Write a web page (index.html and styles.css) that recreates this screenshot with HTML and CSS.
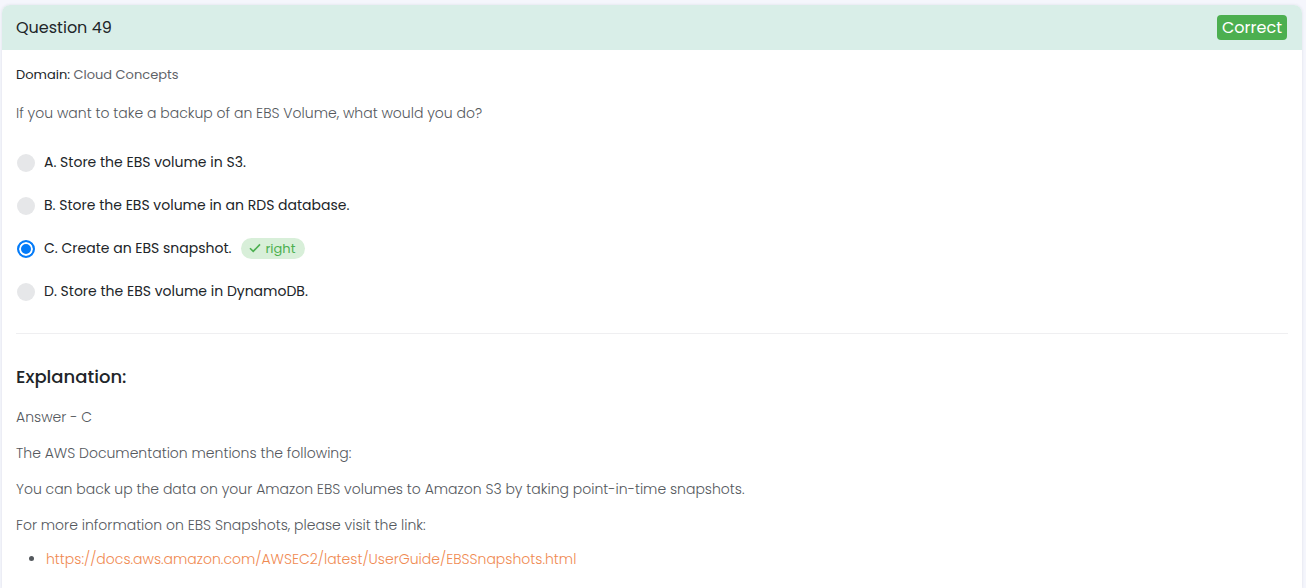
FILE: index.html
```
<!DOCTYPE html>
<html lang="en">
<head>
<meta charset="utf-8">
<meta name="viewport" content="width=device-width, initial-scale=1">
<title>Question 49</title>
<link rel="stylesheet" href="styles.css">
</head>
<body>
<main class="card">
  <header class="card-header">
    <h1 class="question-title">Question 49</h1>
    <span class="status">Correct</span>
  </header>
  <div class="card-body">
    <p class="domain"><span class="domain-label">Domain:</span> Cloud Concepts</p>
    <p class="prompt" id="prompt">If you want to take a backup of an EBS Volume, what would you do?</p>
    <div class="options" role="radiogroup" aria-labelledby="prompt">
      <div class="option">
        <input class="radio" type="radio" name="answer" id="a">
        <label for="a">A. Store the EBS volume in S3.</label>
      </div>
      <div class="option">
        <input class="radio" type="radio" name="answer" id="b">
        <label for="b">B. Store the EBS volume in an RDS database.</label>
      </div>
      <div class="option">
        <input class="radio" type="radio" name="answer" id="c" checked>
        <label for="c">C. Create an EBS snapshot.</label>
        <span class="badge"><svg class="check" viewBox="0 0 12 10" aria-hidden="true"><path d="M1 5.2 4.2 8.4 11 1.4"/></svg>right</span>
      </div>
      <div class="option">
        <input class="radio" type="radio" name="answer" id="d">
        <label for="d">D. Store the EBS volume in DynamoDB.</label>
      </div>
    </div>
    <section class="explanation">
      <h2 class="explanation-title">Explanation:</h2>
      <p>Answer - C</p>
      <p>The AWS Documentation mentions the following:</p>
      <p>You can back up the data on your Amazon EBS volumes to Amazon S3 by taking point-in-time snapshots.</p>
      <p>For more information on EBS Snapshots, please visit the link:</p>
      <ul class="links">
        <li><a href="https://docs.aws.amazon.com/AWSEC2/latest/UserGuide/EBSSnapshots.html">https://docs.aws.amazon.com/AWSEC2/latest/UserGuide/EBSSnapshots.html</a></li>
      </ul>
    </section>
  </div>
</main>
</body>
</html>
```
FILE: styles.css
```
* { box-sizing: border-box; }
body {
  margin: 0;
  padding: 5px 4px 0 2px;
  background: #f5f6fc;
  color: #54585d;
  font: 300 14px/20px Poppins, Inter, sans-serif;
}
h1, h2, p, ul { margin: 0; }
.card {
  min-height: calc(100vh - 5px);
  background: #fff;
  border-radius: 8px 8px 0 0;
  box-shadow: 0 0 3px #dcdde8;
}
.card-header {
  display: flex;
  align-items: center;
  justify-content: space-between;
  height: 45px;
  padding: 0 15px 0 14px;
  background: #d9eee8;
  border-radius: 8px 8px 0 0;
}
.question-title {
  color: #212529;
  font-size: 16px;
  font-weight: 400;
}
.status {
  padding: 0 5px;
  border-radius: 4px;
  background: #4caf50;
  color: #fff;
  font-size: 16px;
  font-weight: 400;
  line-height: 25px;
}
.card-body { padding: 15px 14px 18px; }
.domain { color: #5f6368; font-size: 13px; font-weight: 400; }
.domain-label { color: #212529; }
.prompt { margin-top: 18px; }
.options {
  display: flex;
  flex-direction: column;
  gap: 21px;
  padding: 28px 0 31px;
  border-bottom: 1px solid #efeff1;
}
.option {
  display: flex;
  align-items: center;
  height: 22px;
  color: #212529;
  font-weight: 400;
}
.radio {
  appearance: none;
  width: 18px;
  height: 18px;
  margin: 1px 9px 0 1px;
  border-radius: 50%;
  background: #e6e7e9;
}
.radio:checked {
  border: 2px solid #047bf8;
  background: #047bf8;
  box-shadow: inset 0 0 0 2px #fff;
}
.badge {
  display: flex;
  align-items: center;
  gap: 5px;
  margin-left: 9px;
  padding: 0 10px 0 8px;
  border-radius: 11px;
  background: #d8efd9;
  color: #4caf50;
  font-size: 13px;
  line-height: 21px;
}
.check {
  width: 12px;
  height: 10px;
  fill: none;
  stroke: #4caf50;
  stroke-width: 1.6;
}
.explanation {
  display: flex;
  flex-direction: column;
  gap: 16px;
  padding-top: 31px;
}
.explanation-title {
  margin-bottom: 2px;
  color: #212529;
  font-size: 18px;
  font-weight: 500;
  line-height: 24px;
}
.links { padding-left: 30px; margin-top: -2px; }
.links a { color: #f08a52; text-decoration: none; }
```
